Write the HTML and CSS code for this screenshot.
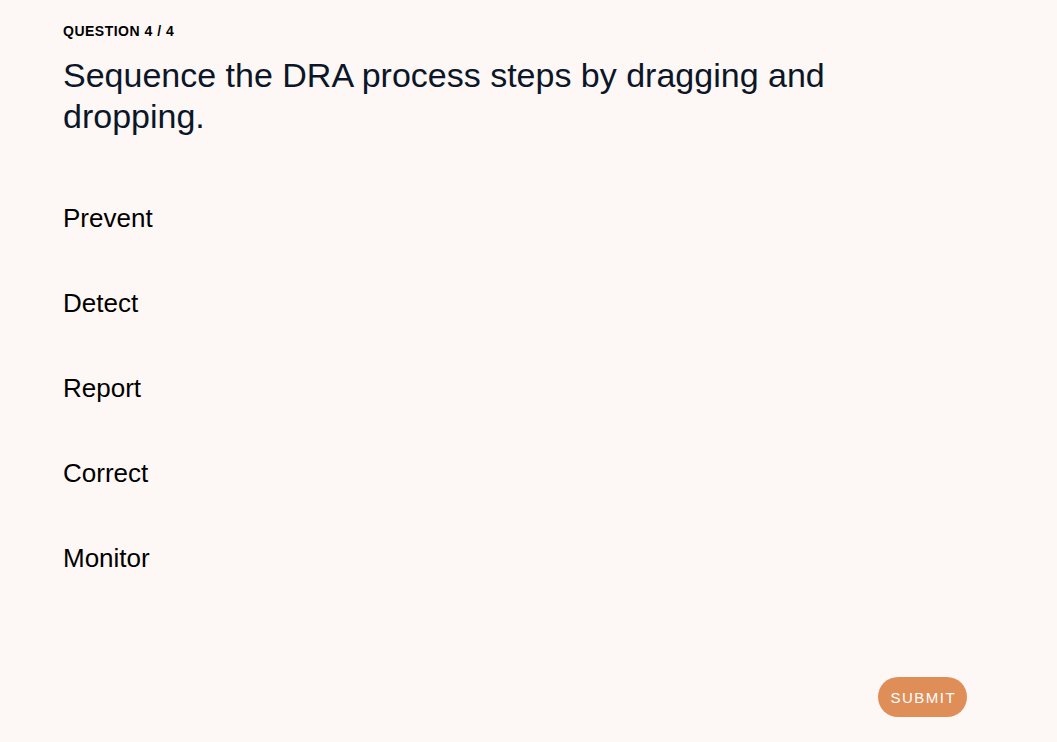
FILE: index.html
```html
<!DOCTYPE html>
<html>
<head>
<meta charset="utf-8">
<link rel="stylesheet" href="styles.css">
</head>
<body>
<main class="quiz">
  <div class="counter">QUESTION 4 / 4</div>
  <h1 class="question">Sequence the DRA process steps by dragging and dropping.</h1>
  <ul class="steps">
    <li class="step">Prevent</li>
    <li class="step">Detect</li>
    <li class="step">Report</li>
    <li class="step">Correct</li>
    <li class="step">Monitor</li>
  </ul>
  <div class="actions">
    <button class="submit">SUBMIT</button>
  </div>
</main>
</body>
</html>
```
FILE: styles.css
```css
html, body {
  margin: 0;
  padding: 0;
  background: #fdf8f5;
  font-family: "Liberation Sans", Arial, sans-serif;
}
.quiz {
  padding: 22px 90px 0 63px;
  height: 742px;
  box-sizing: border-box;
  display: flex;
  flex-direction: column;
}
.counter {
  font-size: 14px;
  font-weight: bold;
  letter-spacing: 0.5px;
  color: #000;
  line-height: 18px;
}
.question {
  margin: 15px 0 0;
  font-size: 34px;
  font-weight: normal;
  line-height: 41px;
  color: #0b1628;
  max-width: 800px;
}
.steps {
  list-style: none;
  margin: 66px 0 0;
  padding: 0;
}
.step {
  font-size: 26px;
  line-height: 30px;
  height: 85px;
  color: #000;
}
.actions {
  margin-top: auto;
  display: flex;
  justify-content: flex-end;
  padding-bottom: 25px;
}
.submit {
  background: #e08e58;
  color: #fff;
  border: none;
  border-radius: 20px;
  height: 40px;
  width: 89px;
  padding: 0;
  font-family: "Liberation Sans", Arial, sans-serif;
  font-size: 15px;
  letter-spacing: 1.5px;
  text-indent: 1.5px;
}
```
